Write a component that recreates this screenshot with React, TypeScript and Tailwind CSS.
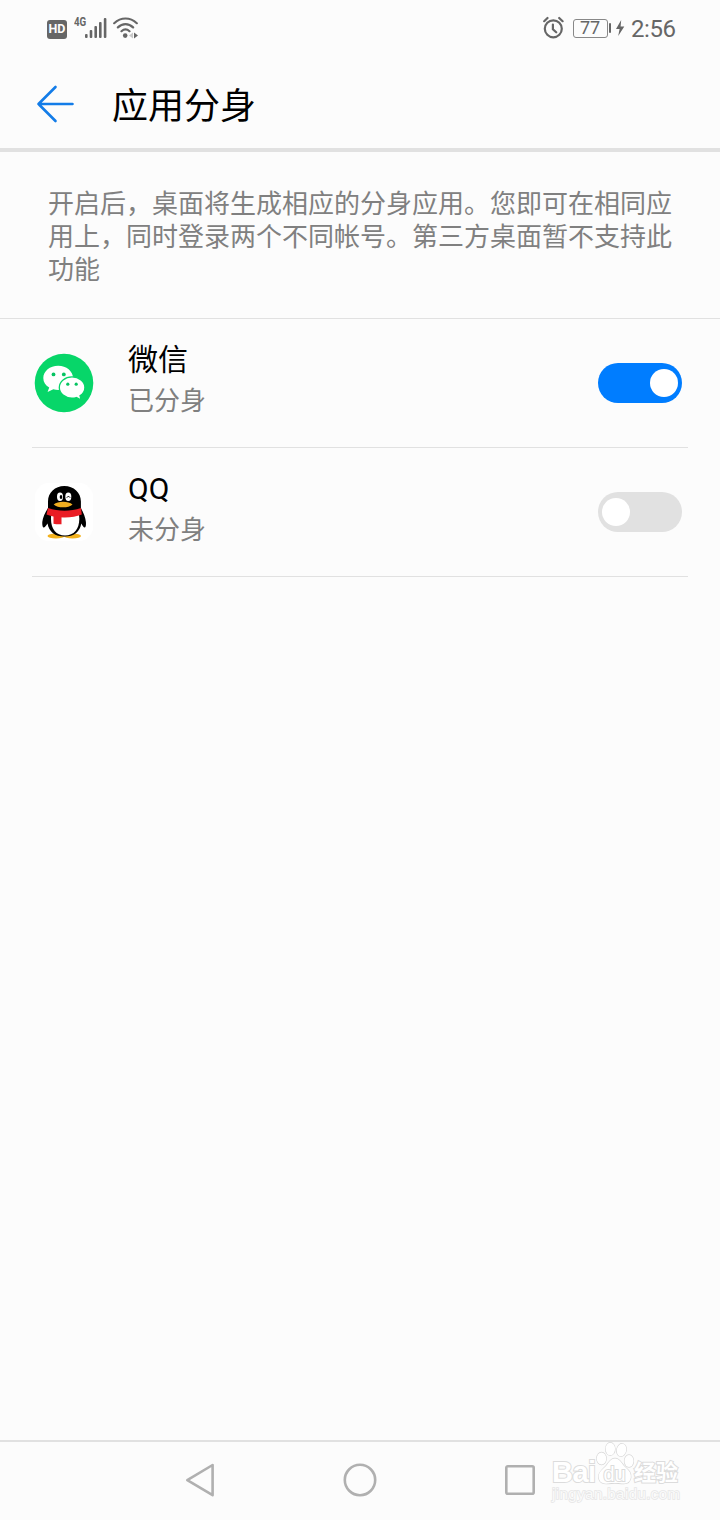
import { useState } from "react";
import type { ReactNode } from "react";
import clsx from "clsx";

interface AppRowProps {
  name: string;
  icon: ReactNode;
  defaultOn?: boolean;
}

export default function App() {
  return (
    <div className="relative flex h-[1520px] w-[720px] flex-col overflow-hidden bg-[#fcfcfc] font-['Roboto','Noto_Sans_CJK_SC',sans-serif] text-black">
      <StatusBar />

      <header className="flex h-24 items-center border-b-4 border-[#e1e1e1] pt-1 pl-9">
        <button aria-label="返回" className="mr-[37px]">
          <BackArrow />
        </button>
        <h1 className="pt-1.5 text-[36px] leading-[48px] font-normal">应用分身</h1>
      </header>

      <p className="h-[167px] border-b border-[#e1e1e1] px-12 pt-9 text-[26px] leading-[33px] text-[#808080]">
        开启后，桌面将生成相应的分身应用。您即可在相同应用上，同时登录两个不同帐号。第三方桌面暂不支持此功能
      </p>

      <main className="flex-1">
        <AppRow name="微信" icon={<WeChatIcon />} defaultOn />
        <AppRow name="QQ" icon={<QQIcon />} />
      </main>

      <NavBar />
      <Watermark />
    </div>
  );
}

function AppRow({ name, icon, defaultOn = false }: AppRowProps) {
  const [on, setOn] = useState(defaultOn);

  return (
    <div className="mx-8 flex h-[129px] items-center border-b border-[#e1e1e1] pr-1.5">
      <span className="mr-8 shrink-0">{icon}</span>
      <div className="-mt-1.5 flex-1">
        <div className="text-[30px] leading-[43px]">{name}</div>
        <div className="text-[26px] leading-[41px] text-[#808080]">{on ? "已分身" : "未分身"}</div>
      </div>
      <button
        role="switch"
        aria-checked={on}
        aria-label={name}
        onClick={() => setOn((v) => !v)}
        className={clsx(
          "flex h-10 w-[84px] items-center rounded-full px-1",
          on ? "justify-end bg-[#007dff]" : "justify-start bg-[#e1e1e1]",
        )}
      >
        <span className="h-7 w-7 rounded-full bg-white" />
      </button>
    </div>
  );
}

function StatusBar() {
  return (
    <div className="flex h-14 items-center justify-between pr-[43px] pl-[47px] text-[#666]">
      <div className="flex items-center">
        <span className="mt-0.5 flex h-[19px] w-5 items-center justify-center rounded-[3px] bg-[#666] text-[12.5px] leading-none font-bold text-[#fcfcfc]">
          HD
        </span>
        <span className="-mt-3.5 ml-[7px] w-[11px]">
          <span className="inline-block origin-left scale-x-[0.75] text-[13px] leading-none font-bold">4G</span>
        </span>
        <svg width="22" height="22" viewBox="0 0 22 22" fill="currentColor">
          <rect x="0" y="17" width="2.6" height="4" rx="1" />
          <rect x="4.7" y="13" width="2.6" height="8" rx="1" />
          <rect x="9.4" y="9" width="2.6" height="12" rx="1" />
          <rect x="14" y="5" width="2.6" height="16" rx="1" />
          <rect x="18.8" y="1" width="2.6" height="20" rx="1" />
        </svg>
        <svg className="ml-1.5" width="26" height="22" viewBox="0 0 26 22" fill="none" stroke="currentColor" strokeWidth="2.2" strokeLinecap="round">
          <path d="M1.2 6.2C8-.1 17-.1 23.8 6.2M4.9 10.4c4.5-4.3 10.7-4.3 15.2 0M8.5 14.2c2.4-2.2 5.6-2.2 8 0" />
          <circle cx="12.2" cy="18.6" r="2.3" fill="currentColor" stroke="none" />
          <path d="M20 15.5v6l-4-3z" fill="#c8c8c8" stroke="none" />
          <path d="M21 15.5v6l4-3z" fill="currentColor" stroke="none" />
        </svg>
      </div>

      <div className="flex items-center">
        <svg width="22" height="24" viewBox="0 0 22 24" fill="none" stroke="currentColor" strokeWidth="2.2" strokeLinecap="round">
          <circle cx="10.3" cy="12.8" r="8.5" />
          <path d="M1.2 5.2 4.5 2M19.6 5.2 16.2 2M9.9 8.5v4.7l3.3 3.1" />
        </svg>
        <span className="ml-2 flex h-[19px] w-[35px] items-center justify-center rounded-[3px] border border-[#888] text-[18px] leading-none">
          77
        </span>
        <span className="ml-px h-2.5 w-[2.5px] rounded-sm bg-[#666]" />
        <svg className="ml-1" width="10" height="18" viewBox="0 0 10 18" fill="currentColor">
          <path d="M6.2 1 1 10h3.6L3.2 17 9.3 7.6H5.6z" />
        </svg>
        <span className="ml-1.5 w-[46px] pt-0.5 text-[24px] leading-none tracking-[-0.4px]">2:56</span>
      </div>
    </div>
  );
}

function BackArrow() {
  return (
    <svg width="39" height="38" viewBox="0 0 39 38" fill="none" stroke="#137ce8" strokeWidth="2.6" strokeLinecap="round" strokeLinejoin="round">
      <path d="M19.5 2 2.5 19l17 17M2.5 19h34" />
    </svg>
  );
}

function WeChatIcon() {
  return (
    <svg width="64" height="64" viewBox="0 0 64 64">
      <circle cx="32" cy="32" r="29.3" fill="#07d669" />
      <path
        d="M26.2 14.7c-8.3 0-14.9 5.5-14.9 12.2 0 4 2.2 7.4 5.9 9.6L15.6 41l5.7-2.7c1.6.5 3.2.7 4.9.7 8.2 0 14.8-5.4 14.8-12.1s-6.6-12.2-14.8-12.2z"
        fill="#fff"
      />
      <path
        d="M40 25.8c6.9 0 12.9 4.7 12.9 10.6 0 3.4-1.9 6.3-4.9 8.4l1.2 4.2-4.8-2.5c-1.4.4-2.8.6-4.4.6-6.9 0-12.7-4.7-12.7-10.6S33.1 25.8 40 25.8z"
        fill="#fff"
        stroke="#07d669"
        strokeWidth="1.3"
      />
      <g fill="#07c463">
        <circle cx="21.5" cy="23.4" r="1.9" />
        <circle cx="31.8" cy="23.4" r="1.9" />
        <circle cx="35.8" cy="33.2" r="1.6" />
        <circle cx="44.2" cy="33.2" r="1.6" />
      </g>
    </svg>
  );
}

function QQIcon() {
  return (
    <svg width="64" height="64" viewBox="0 0 64 64">
      <rect x="3" y="3" width="58" height="58" rx="14" fill="#fff" />
      <ellipse cx="24" cy="56" rx="8.5" ry="2.4" fill="#f3b21e" />
      <ellipse cx="40.5" cy="56" rx="8.5" ry="2.4" fill="#f3b21e" />
      <path
        d="M32.3 6C23 6 16 12.5 16 21.5V28c-2.8 4.5-5.4 9.7-5.7 14-.2 3.3.4 5.5 1.3 5.5 1.2 0 2.6-1.7 3.9-4 1.5 8.5 7.5 13 17 13s15.400-4.500 16.800-13c1.100 2.300 2.300 4 3.400 4 1 0 1.500-2.200 1.200-5.500-.3-4.300-2.600-9.500-5-14v-6.500C48.900 12.500 41.800 6 32.300 6z"
        fill="#000"
      />
      <path d="M19.5 33c-.4 2-.5 4-.5 6 0 10 5 16.500 14 16.500S47.300 49 47.300 39c0-2-.2-4-.6-6z" fill="#fff" />
      <path d="M16 28c10.500 3.500 22.500 3.500 33 0l.8 6.500c-5 2-10.500 3-17 3.100-6.600.1-13.300-.8-18.300-3z" fill="#ea1c24" />
      <path d="M21.500 33h8v11.200c-2.700.3-5.300.1-8-.5z" fill="#ea1c24" />
      <ellipse cx="28" cy="16.800" rx="3" ry="4.200" fill="#fff" />
      <ellipse cx="36.300" cy="16.800" rx="3" ry="4.200" fill="#fff" />
      <ellipse cx="29" cy="17" rx="1.300" ry="1.900" fill="#000" />
      <path d="M35 17.300c.6-1.200 2.200-1.200 2.900 0" fill="none" stroke="#000" strokeWidth="1" strokeLinecap="round" />
      <path d="M21.700 24.500c4-3.800 14.800-3.800 18.800 0-4 3.800-14.800 3.800-18.800 0z" fill="#f0ae20" />
    </svg>
  );
}

function NavBar() {
  return (
    <nav className="flex h-20 items-center justify-center gap-[120px] border-t-2 border-[#e1e1e1] text-[#b0b0b0]">
      <svg width="40" height="40" viewBox="0 0 40 40" fill="none" stroke="currentColor" strokeWidth="2.6" strokeLinejoin="round">
        <path d="M32.600 4v30.200L7.300 19.100z" />
      </svg>
      <svg width="40" height="40" viewBox="0 0 40 40" fill="none" stroke="currentColor" strokeWidth="2.6">
        <circle cx="20" cy="19" r="15.2" />
      </svg>
      <svg width="40" height="40" viewBox="0 0 40 40" fill="none" stroke="currentColor" strokeWidth="2.6">
        <rect x="6.3" y="5.3" width="27.4" height="27.4" rx="1.5" />
      </svg>
    </nav>
  );
}

function Watermark() {
  return (
    <div className="absolute top-[1440px] left-[552px] w-[132px] font-['Liberation_Sans','Noto_Sans_CJK_SC',sans-serif] whitespace-nowrap text-white">
      <div className="flex h-[46px] items-end font-bold [-webkit-text-stroke:2px_#dcdcdc] [paint-order:stroke_fill]">
        <span className="w-[43px] text-[29px] leading-[28px] tracking-[-0.5px]">Bai</span>
        <span className="relative flex h-[44px] w-[39px] items-end justify-center">
          <svg className="absolute inset-0" width="39" height="44" viewBox="0 0 39 44" fill="#fff" stroke="#d8d8d8" strokeWidth="1.3">
            <ellipse cx="6.5" cy="16.5" rx="4.7" ry="6" />
            <ellipse cx="15.3" cy="7" rx="4.7" ry="6.3" />
            <ellipse cx="26.5" cy="8" rx="4.7" ry="6.3" transform="rotate(12 26.5 8)" />
            <ellipse cx="34" cy="19" rx="4.5" ry="6" />
            <path d="M20 16.5c4.500 0 6 4 9 7.500 3.500 3.500 7.500 6 6.800 11.500-.8 5.500-5.300 6.500-9 6-4.600-.6-9.300-.6-13.800 0-4.500.6-8.700-.8-9.300-6-.6-5.300 4-8 7.300-11.500 3-3.500 4.500-7.500 9-7.500z" />
          </svg>
          <span className="relative text-[20px] leading-[24px] font-normal">du</span>
        </span>
        <span className="text-[22px] leading-[27px]">经验</span>
      </div>
      <div className="text-[15px] leading-[16px] tracking-[0.45px] text-[#fafafa] [-webkit-text-stroke:1.5px_#e6e6e6] [paint-order:stroke_fill]">
        jingyan.baidu.com
      </div>
    </div>
  );
}
